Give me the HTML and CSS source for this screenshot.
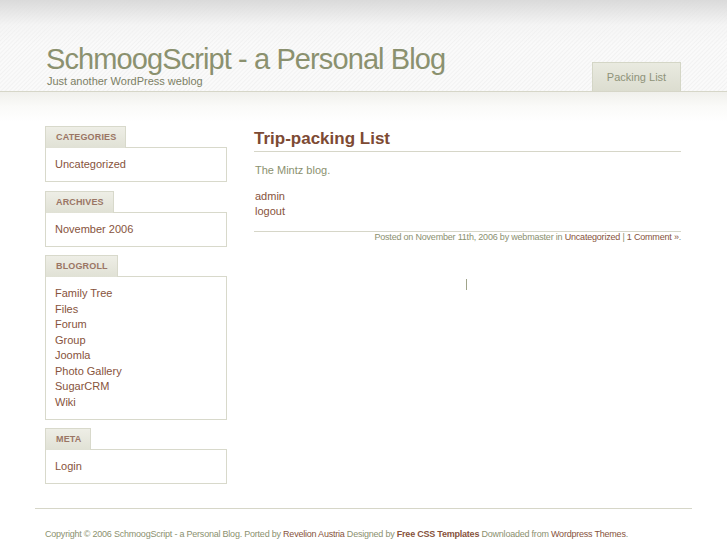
FILE: index.html
```html
<!DOCTYPE html>
<html lang="en">
<head>
  <meta charset="UTF-8">
  <title>SchmoogScript - a Personal Blog</title>
  <link rel="stylesheet" href="styles.css">
</head>
<body>
  <div class="header">
    <div class="header-inner">
      <div class="logo">
        <h1><a href="#">SchmoogScript - a Personal Blog</a></h1>
        <p>Just another WordPress weblog</p>
      </div>
      <ul class="menu">
        <li><a href="#">Packing List</a></li>
      </ul>
    </div>
  </div>

  <div class="page">
    <div class="sidebar">
      <div class="widget">
        <h3>Categories</h3>
        <ul class="box">
          <li><a href="#">Uncategorized</a></li>
        </ul>
      </div>
      <div class="widget">
        <h3>Archives</h3>
        <ul class="box">
          <li><a href="#">November 2006</a></li>
        </ul>
      </div>
      <div class="widget">
        <h3>Blogroll</h3>
        <ul class="box">
          <li><a href="#">Family Tree</a></li>
          <li><a href="#">Files</a></li>
          <li><a href="#">Forum</a></li>
          <li><a href="#">Group</a></li>
          <li><a href="#">Joomla</a></li>
          <li><a href="#">Photo Gallery</a></li>
          <li><a href="#">SugarCRM</a></li>
          <li><a href="#">Wiki</a></li>
        </ul>
      </div>
      <div class="widget">
        <h3>Meta</h3>
        <ul class="box">
          <li><a href="#">Login</a></li>
        </ul>
      </div>
    </div>

    <div class="content">
      <div class="post">
        <h2><a href="#">Trip-packing List</a></h2>
        <div class="entry">
          <p>The Mintz blog.</p>
          <p><a href="#">admin</a><br><a href="#">logout</a></p>
        </div>
        <p class="meta">Posted on November 11th, 2006 by webmaster in <a href="#">Uncategorized</a> | <a href="#">1 Comment &raquo;</a>.</p>
      </div>
      <span class="caret"></span>
    </div>
  </div>

  <div class="footer">
    <p>Copyright &copy; 2006 SchmoogScript - a Personal Blog. Ported by <a href="#">Revelion Austria</a> Designed by <a href="#"><b>Free CSS Templates</b></a> Downloaded from <a href="#">Wordpress Themes</a>.</p>
  </div>
</body>
</html>
```

FILE: styles.css
```css
body {
    margin: 0;
    font-family: "Liberation Sans", Arial, sans-serif;
    font-size: 11px;
    color: #8b916f;
    background: #fff;
}

a {
    color: #87533c;
    text-decoration: none;
}

ul {
    list-style: none;
    margin: 0;
    padding: 0;
}

/* header */
.header {
    height: 91px;
    border-bottom: 1px solid #d6d6c8;
    background:
        linear-gradient(to bottom, rgba(215,215,215,0.9) 0, rgba(240,240,240,0.5) 25px, rgba(255,255,255,0) 45px),
        repeating-linear-gradient(135deg, #fafafa 0, #fafafa 1px, #f2f2f2 2px, #fafafa 3px);
}

.header-inner {
    display: flex;
    justify-content: space-between;
    align-items: flex-end;
    height: 91px;
    padding: 0 46px 0 46px;
}

.logo {
    padding-bottom: 4px;
}

.logo h1 {
    margin: 0;
    font-size: 29px;
    font-weight: normal;
    letter-spacing: -0.9px;
    line-height: 32px;
}

.logo h1 a {
    color: #8b916f;
}

.logo p {
    margin: 0 0 0 1px;
    font-size: 11px;
    line-height: 12px;
    color: #7c8065;
}

.menu li a {
    display: block;
    width: 87px;
    height: 28px;
    line-height: 28px;
    text-align: center;
    font-size: 11px;
    color: #8f9379;
    border: 1px solid #d4d6c6;
    border-bottom: none;
    background: linear-gradient(to bottom, #e9eae0, #dcddd0);
}

/* page */
.page {
    display: flex;
    gap: 27px;
    padding: 34px 46px 0 45px;
    background: linear-gradient(to bottom, #f0f0ec 0, #fafaf8 14px, #fff 30px);
}

.sidebar {
    width: 182px;
    flex-shrink: 0;
}

.widget {
    margin-bottom: 8.5px;
}

.widget:last-child {
    margin-bottom: 0;
}

.widget h3 {
    display: block;
    width: fit-content;
    position: relative;
    margin: 0 0 -1px 0;
    padding: 0 9px 0 10px;
    height: 21px;
    line-height: 21px;
    font-size: 9px;
    font-weight: bold;
    letter-spacing: 0.15px;
    text-transform: uppercase;
    color: #9a7564;
    border: 1px solid #d8d9cb;
    border-bottom: none;
    background: linear-gradient(to bottom, #eeeee6, #e0e1d5);
}

.widget .box {
    border: 1px solid #d8d9cb;
    padding: 9px 10px 8.5px 9px;
    line-height: 15.5px;
    font-size: 11px;
    background: #fff;
}

.content {
    flex: 1;
    position: relative;
}

.post h2 {
    margin: 0;
    padding: 3px 0 2px 0;
    font-size: 17px;
    line-height: 20px;
    border-bottom: 1px solid #d6d6c8;
}

.post h2 a {
    color: #7d4a33;
}

.entry p {
    margin: 10px 0 0 1px;
    line-height: 15.5px;
}

.entry p:first-child {
    margin-top: 11px;
}

.meta {
    margin: 11px 0 0 0;
    padding-top: 0;
    border-top: 1px solid #d6d6c8;
    text-align: right;
    font-size: 9px;
    line-height: 11px;
    letter-spacing: -0.2px;
}

.caret {
    position: absolute;
    left: 212px;
    top: 153px;
    width: 1px;
    height: 11px;
    background: #a0a48a;
}

/* footer */
.footer {
    width: 657px;
    margin: 24px auto 0 auto;
    border-top: 1px solid #d6d6c8;
    padding: 14px 0 0 10px;
    box-sizing: border-box;
}

.footer p {
    margin: 0;
    font-size: 9px;
    line-height: 22px;
    letter-spacing: -0.22px;
}
```
